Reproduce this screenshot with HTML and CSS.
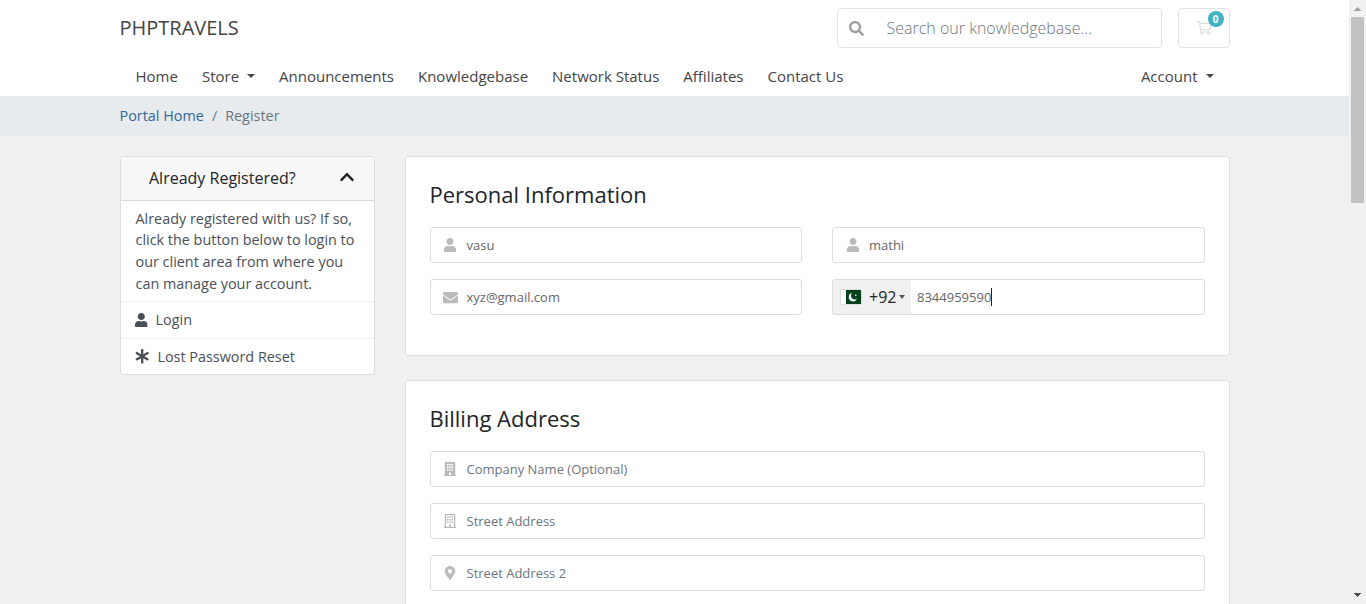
FILE: index.html
```html
<!DOCTYPE html>
<html lang="en">
<head>
<meta charset="utf-8">
<title>Register - PHPTRAVELS</title>
<link rel="stylesheet" href="styles.css">
</head>
<body>
<svg class="symbols" aria-hidden="true">
  <symbol id="user" viewBox="0 0 448 512"><path d="M224 256c70.7 0 128-57.3 128-128S294.7 0 224 0 96 57.3 96 128s57.3 128 128 128zm89.6 32h-16.7c-22.2 10.2-46.9 16-72.9 16s-50.6-5.8-72.9-16h-16.7C60.2 288 0 348.2 0 422.4V464c0 26.5 21.5 48 48 48h352c26.5 0 48-21.5 48-48v-41.6c0-74.2-60.2-134.4-134.4-134.4z"/></symbol>
</svg>
<div class="window">
<div class="page">
  <header class="header">
    <div class="container topbar">
      <a class="brand">PHPTRAVELS</a>
      <div class="search">
        <svg class="search-icon" viewBox="0 0 512 512"><path d="M505 442.7L405.3 343c-4.5-4.5-10.6-7-17-7H372c27.600-35.300 44-79.700 44-128C416 93.100 322.900 0 208 0S0 93.100 0 208s93.100 208 208 208c48.300 0 92.700-16.400 128-44v16.300c0 6.400 2.500 12.500 7 17l99.700 99.700c9.400 9.400 24.600 9.400 33.900 0l28.300-28.300c9.400-9.400 9.400-24.600.1-34zM208 336c-70.700 0-128-57.200-128-128 0-70.700 57.200-128 128-128 70.700 0 128 57.200 128 128 0 70.700-57.200 128-128 128z"/></svg>
        <span class="search-text">Search our knowledgebase...</span>
      </div>
      <div class="cart">
        <svg class="cart-icon" viewBox="0 0 576 512"><path d="M551.991 64H144.280l-8.726-44.608C133.350 8.128 123.478 0 112 0H12C5.373 0 0 5.373 0 12v24c0 6.627 5.373 12 12 12h80.240l69.594 355.701C150.796 415.201 144 430.802 144 448c0 35.346 28.654 64 64 64s64-28.654 64-64a63.681 63.681 0 0 0-8.583-32h145.167a63.681 63.681 0 0 0-8.583 32c0 35.346 28.654 64 64 64 35.346 0 64-28.654 64-64 0-17.993-7.435-34.240-19.388-45.868C506.022 391.891 496.760 384 485.328 384H206.896l-9.390-48h312.405c11.290 0 21.054-7.869 23.452-18.902l42.158-192C578.772 110.100 567.361 64 551.991 64zM208 472c-13.234 0-24-10.766-24-24s10.766-24 24-24 24 10.766 24 24-10.766 24-24 24zm256 0c-13.234 0-24-10.766-24-24s10.766-24 24-24 24 10.766 24 24-10.766 24-24 24zm23.438-184H188.115l-34.430-176h372.398l-38.645 176z"/></svg>
        <span class="badge">0</span>
      </div>
    </div>
    <nav class="container nav">
      <a>Home</a><a class="drop">Store</a><a>Announcements</a><a>Knowledgebase</a><a>Network Status</a><a>Affiliates</a><a>Contact Us</a><a class="drop account">Account</a>
    </nav>
  </header>
  <div class="crumbs"><div class="container crumb-list"><a>Portal Home</a><span>/</span><span>Register</span></div></div>
  <main class="container main">
    <aside class="panel">
      <div class="panel-head"><h3>Already Registered?</h3>
        <svg class="chevron" viewBox="0 0 448 512"><path d="M240.971 130.524l194.343 194.343c9.373 9.373 9.373 24.569 0 33.941l-22.667 22.667c-9.357 9.357-24.522 9.375-33.901.040L224 227.495 69.255 381.516c-9.379 9.335-24.544 9.317-33.901-.040l-22.667-22.667c-9.373-9.373-9.373-24.569 0-33.941L207.030 130.525c9.372-9.373 24.568-9.373 33.941-.001z"/></svg>
      </div>
      <p class="panel-body">Already registered with us? If so,<br>click the button below to login to<br>our client area from where you<br>can manage your account.</p>
      <a class="panel-link"><svg class="link-user"><use href="#user"/></svg><span>Login</span></a>
      <a class="panel-link"><svg class="link-star" viewBox="0 0 512 512"><path d="M478.210 334.093L336 256l142.210-78.093c11.795-6.477 15.961-21.384 9.232-33.037l-19.480-33.741c-6.728-11.653-21.720-15.499-33.227-8.523L296 186.718l3.475-162.204C299.763 11.061 288.937 0 275.480 0h-38.960c-13.456 0-24.283 11.061-23.994 24.514L216 186.718 77.265 102.607c-11.506-6.976-26.499-3.130-33.227 8.523l-19.480 33.741c-6.728 11.653-2.562 26.560 9.233 33.037L176 256 33.790 334.093c-11.795 6.477-15.961 21.384-9.232 33.037l19.480 33.741c6.728 11.653 21.721 15.499 33.227 8.523L216 325.282l-3.475 162.204C212.237 500.939 223.064 512 236.520 512h38.961c13.456 0 24.283-11.061 23.995-24.514L296 325.282l138.735 84.111c11.506 6.976 26.499 3.130 33.227-8.523l19.480-33.741c6.728-11.653 2.563-26.559-9.232-33.036z"/></svg><span>Lost Password Reset</span></a>
    </aside>
    <div class="cards">
      <section class="card personal">
        <h2>Personal Information</h2>
        <div class="grid">
          <div class="field"><svg class="icon"><use href="#user"/></svg><span>vasu</span></div>
          <div class="field"><svg class="icon"><use href="#user"/></svg><span>mathi</span></div>
          <div class="field"><svg class="icon mail" viewBox="0 0 512 512"><path d="M502.300 190.800c3.900-3.100 9.700-.2 9.700 4.700V400c0 26.500-21.500 48-48 48H48c-26.500 0-48-21.500-48-48V195.600c0-5 5.700-7.800 9.700-4.700 22.400 17.400 52.100 39.500 154.100 113.600 21.100 15.400 56.700 47.800 92.200 47.600 35.700.3 72-32.800 92.300-47.600 102-74.100 131.600-96.300 154-113.700zM256 320c23.200.4 56.600-29.200 73.400-41.400 132.700-96.300 142.800-104.700 173.400-128.700 5.800-4.500 9.200-11.500 9.200-18.900v-19c0-26.500-21.500-48-48-48H48c-26.500 0-48 21.500-48 48v19c0 7.400 3.400 14.300 9.200 18.900 30.600 23.900 40.700 32.400 173.400 128.700 16.800 12.200 50.200 41.800 73.400 41.400z"/></svg><span>xyz@gmail.com</span></div>
          <div class="field phone">
            <div class="country">
              <svg class="flag" viewBox="0 0 20 14"><path fill="#fff" d="M0 0h5v14H0z"/><path fill="#01411c" d="M5 0h15v14H5z"/><path fill="#fff" d="M11.400 3A4.200 4.200 0 1 0 15.900 8.500A3.500 3.500 0 1 1 11.400 3zM14.500 4l.4.700.8-.1-.5.7.5.7-.8-.2-.5.7-.1-.9-.7-.3.800-.300z"/></svg>
              <span class="code">+92</span><i class="mini-caret"></i>
            </div>
            <span class="number">8344959590</span>
          </div>
        </div>
      </section>
      <section class="card billing">
        <h2>Billing Address</h2>
        <div class="field"><svg class="icon" viewBox="0 0 448 512"><path fill-rule="evenodd" d="M436 472h-20V24c0-13-11-24-24-24H56C43 0 32 11 32 24v448H12c-7 0-12 5-12 12v28h448v-28c0-7-5-12-12-12zM112 72h56v56h-56zM196 72h56v56h-56zM280 72h56v56h-56zM112 168h56v56h-56zM196 168h56v56h-56zM280 168h56v56h-56zM112 264h56v56h-56zM196 264h56v56h-56zM280 264h56v56h-56zM192 384h64v88h-64z"/></svg><span class="placeholder">Company Name (Optional)</span></div>
        <div class="field"><svg class="icon" viewBox="0 0 448 512"><path fill-rule="evenodd" d="M436 464h-20V24c0-13-11-24-24-24H56C43 0 32 11 32 24v440H12c-7 0-12 5-12 12v36h448v-36c0-7-5-12-12-12zM80 48h288v416H256v-80h-64v80H80z"/><path d="M112 84h56v56h-56zM196 84h56v56h-56zM280 84h56v56h-56zM112 180h56v56h-56zM196 180h56v56h-56zM280 180h56v56h-56zM112 276h56v56h-56zM196 276h56v56h-56zM280 276h56v56h-56z"/></svg><span class="placeholder">Street Address</span></div>
        <div class="field"><svg class="icon" viewBox="0 0 384 512"><path d="M172.268 501.670C26.970 291.031 0 269.413 0 192 0 85.961 85.961 0 192 0s192 85.961 192 192c0 77.413-26.970 99.031-172.268 309.670-9.535 13.774-29.930 13.773-39.464 0zM192 272c44.183 0 80-35.817 80-80s-35.817-80-80-80-80 35.817-80 80 35.817 80 80 80z"/></svg><span class="placeholder">Street Address 2</span></div>
      </section>
    </div>
  </main>
</div>
<div class="scrollbar">
  <svg class="arrow" viewBox="0 0 17 17" shape-rendering="crispEdges"><path fill="#a3a3a3" d="M8 7h1v1h1v1h1v1h1v1H5v-1h1V9h1V8h1z"/></svg>
  <div class="thumb"></div>
  <svg class="arrow" viewBox="0 0 17 17" shape-rendering="crispEdges"><path fill="#505050" d="M5 6h7v1h-1v1h-1v1H9v1H8V9H7V8H6V7H5z"/></svg>
</div>
</div>
</body>
</html>
```
FILE: styles.css
```css
* { box-sizing: border-box; }
body { margin: 0; font: 16px/24px "Open Sans", sans-serif; color: #212529; background: #f0f0f0; }
h2, h3, p { margin: 0; font-weight: 400; }
svg { display: block; fill: currentColor; flex: none; }
.symbols { display: none; }
.window { display: flex; height: 604px; overflow: hidden; }
.page { width: 1349px; height: 604px; overflow: hidden; }
.container { width: 1110px; margin: 0 auto; }
.header { height: 96px; background: #fff; color: #444; }
.topbar { display: flex; padding-top: 8px; height: 56px; }
.brand { font-size: 20px; line-height: 40px; margin-right: auto; }
.search { width: 325px; height: 40px; border: 1px solid #e2e2e2; border-radius: 4px; display: flex; align-items: center; padding-left: 11px; }
.search-icon { width: 15px; height: 15px; color: #a0a0a0; margin-right: 23px; }
.search-text { font-weight: 300; color: #6c757d; line-height: 38px; }
.cart { position: relative; width: 52px; height: 40px; margin-left: 16px; border: 1px solid #e2e2e2; border-radius: 4px; padding: 12px 17px; }
.cart-icon { width: 16px; height: 14px; color: #ddd; }
.badge { position: absolute; left: 29px; top: 2px; width: 16px; height: 16px; border-radius: 8px; background: #42b3c5; color: #fff; font-size: 10px; line-height: 16px; font-weight: 700; text-align: center; }
.nav { display: flex; font-size: 15px; line-height: 24px; gap: 24px; padding: 8px 16px; }
.drop::after { content: ""; display: inline-block; margin-left: 8px; vertical-align: 4px; border: 4.500px solid transparent; border-top-color: currentColor; border-bottom: 0; }
.account { margin-left: auto; }
.crumbs { height: 40px; background: #e7ebee; color: #6c757d; font-size: 14.4px; line-height: 40px; }
.crumb-list { display: flex; gap: 8px; }
.crumbs a { color: #336699; }
.main { display: flex; gap: 30px; padding-top: 20px; }
.panel { width: 255px; height: 219px; background: #fff; border: 1px solid #dcdcdc; border-radius: 4px; color: #495057; font-size: 14.4px; }
.panel-head { height: 44px; display: flex; align-items: center; justify-content: space-between; padding: 0 20px 2px 28.500px; background: #f7f7f7; border-bottom: 1px solid #d8d8d8; border-radius: 3px 3px 0 0; color: #212529; }
.panel-head h3 { font-size: 16px; }
.chevron { width: 14px; height: 16px; margin-bottom: 2px; }
.panel-body { height: 101px; padding: 6.800px 14px 0 15px; line-height: 21.600px; border-bottom: 1px solid #f0f0f0; white-space: nowrap; }
.panel-link { height: 37px; display: flex; align-items: center; padding-left: 14.500px; border-bottom: 1px solid #f0f0f0; }
.panel-link:last-child { border: 0; height: 35px; }
.link-user { width: 12.600px; height: 14.400px; margin-right: 8px; }
.link-star { width: 14.400px; height: 14.400px; margin-right: 8px; }
.cards { width: 825px; }
.card { background: #fff; border: 1px solid #dcdcdc; border-radius: 4px; padding: 24px; margin-bottom: 24px; }
.personal { height: 200px; }
.billing { height: 400px; }
.card h2 { font-size: 22px; line-height: 26px; margin-bottom: 20px; }
.grid { display: grid; grid-template-columns: 372.500px 372.500px; column-gap: 30px; }
.field { height: 36px; border: 1px solid #dcdcdc; border-radius: 3px; display: flex; align-items: center; padding-left: 12.500px; margin-bottom: 16px; color: #666; font-size: 13px; }
.icon { width: 14px; height: 14px; color: #bbb; margin-right: 9.500px; }
.mail { width: 15px; height: 15px; margin: 0 9px 0 -.5px; }
.placeholder { color: #6c757d; }
.phone { padding-left: 0; }
.country { width: 78px; height: 34px; background: #f0f0f0; display: flex; align-items: center; padding-left: 8px; color: #212529; font-size: 16px; border-radius: 2px 0 0 2px; }
.flag { width: 20px; height: 14px; margin-right: 8px; box-shadow: 0 0 1px #888; }
.mini-caret { margin-left: 3px; border: 3px solid transparent; border-top: 4px solid #555; border-bottom: 0; }
.number { margin-left: 6px; line-height: 18px; border-right: 1px solid #222; }
.scrollbar { width: 17px; height: 604px; background: #f1f1f1; display: flex; flex-direction: column; align-items: center; }
.arrow { width: 17px; height: 17px; }
.thumb { width: 13px; height: 186px; background: #c1c1c1; margin-bottom: auto; }
```
